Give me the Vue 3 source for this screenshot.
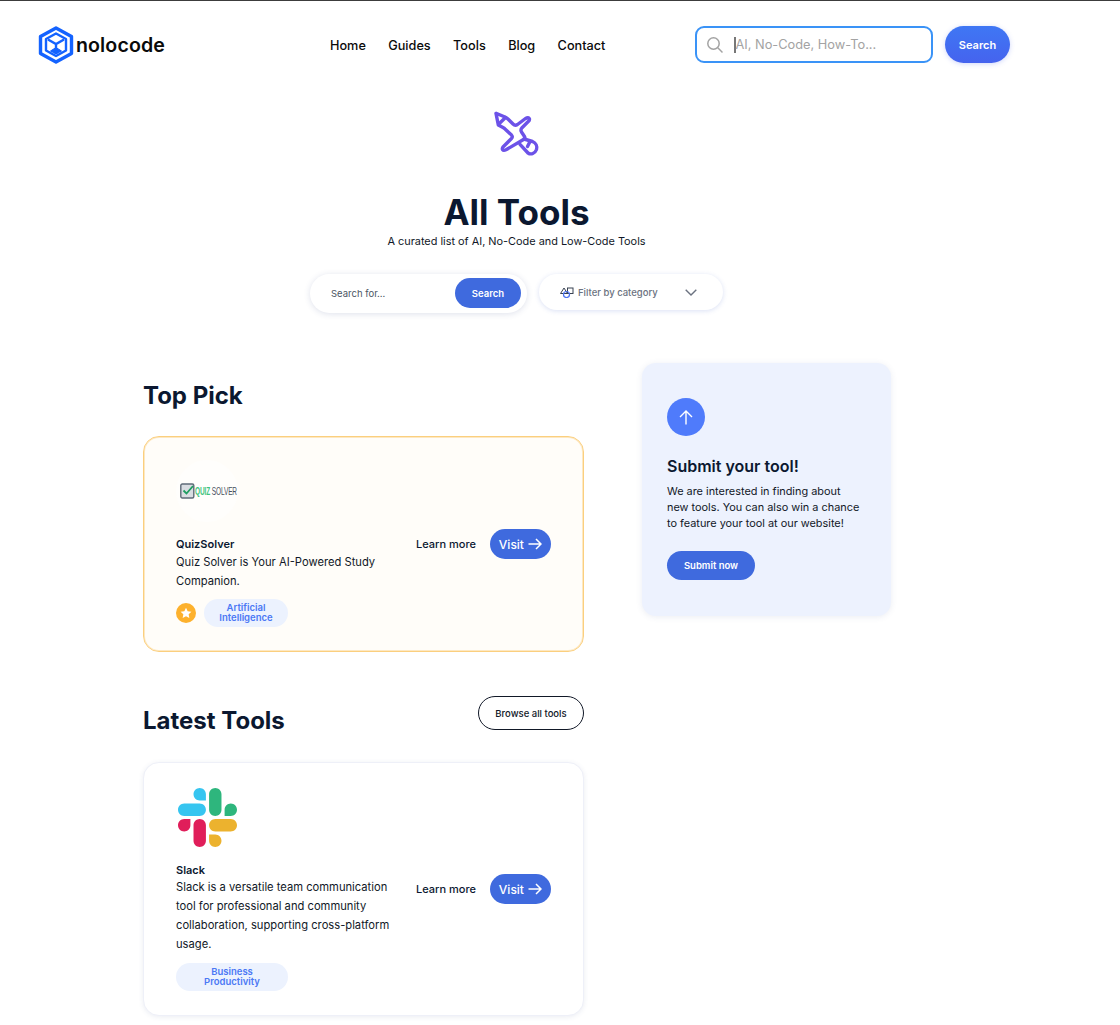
<script setup>
const navLinks = ['Home', 'Guides', 'Tools', 'Blog', 'Contact']
</script>

<template>
  <div class="page">
    <header class="header">
      <a class="logo">
        <svg width="36" height="38" viewBox="0 0 36 38" fill="none" stroke="#1463ff">
          <path d="M18 2 33.5 10.5V27.5L18 36 2.5 27.5V10.5Z" stroke-width="3.4" stroke-linejoin="round" />
          <path d="M18 7.5 28 13V24.5L18 30 8 24.5V13Z" stroke-width="2.4" stroke-linejoin="round" />
          <path d="M10 13.5 18 18 26 13.5M18 18V28" stroke-width="2.4" />
          <path d="M18 21.5 23.5 25 18 28 12.5 25Z" fill="#1463ff" stroke-width="1" />
        </svg>
        <span class="logo-text">nolocode</span>
      </a>
      <nav class="nav">
        <a v-for="link in navLinks" :key="link">{{ link }}</a>
      </nav>
      <div class="site-search">
        <svg width="18" height="18" viewBox="0 0 18 18" fill="none" stroke="#a3a3a3" stroke-width="1.5">
          <circle cx="7.5" cy="7.5" r="5.7" />
          <path d="M11.8 11.8 16.5 16.5" />
        </svg>
        <span class="caret"></span>
        <span class="site-placeholder">AI, No-Code, How-To...</span>
      </div>
      <button class="site-btn">Search</button>
    </header>

    <section class="hero">
      <svg class="hero-icon" width="50" height="50" viewBox="492 108 50 50" fill="none" stroke="#6c52e8" stroke-width="3.4" stroke-linejoin="round" stroke-linecap="round">
        <path d="M496 113.3 505 117Q507 118 508.5 119.5L513 124Q515 126 517.5 124.5L525.5 118.5Q528 117 529.3 118.5 529.8 119.5 529 120.8L521.8 128Q520.3 130 521.5 132L524.5 136.5Q525.5 138.3 523.5 139.5L506 149.8Q503.5 151 502.5 149.5 502 148.5 503 147L511.5 138.5Q513 136.7 511.5 135L505.5 129.5Q504.5 128.3 503 127.5L498.3 125Z" />
        <path d="M498.8 124 505.5 117.5" />
        <path d="M524 139 532.5 141.5C536 143 537.5 146.5 536.5 149.5 535 153.5 531 155 528 153L520 144.3" />
        <path d="M530 141.5 527.5 146.5" />
      </svg>
      <h1>All Tools</h1>
      <p class="subtitle">A curated list of AI, No-Code and Low-Code Tools</p>
      <div class="filters">
        <div class="tool-search">
          <span class="tool-placeholder">Search for...</span>
          <button class="tool-btn">Search</button>
        </div>
        <div class="category">
          <svg width="14" height="11" viewBox="0 0 14 11" fill="none" stroke-width="1">
            <path d="M.5 6.5 4 1 7.5 6.5Z" stroke="#374151" />
            <rect x="7.5" y="1" width="5.5" height="5.5" stroke="#374151" />
            <circle cx="6.5" cy="7.5" r="3" stroke="#4c73f0" stroke-width="1.2" />
          </svg>
          <span class="category-label">Filter by category</span>
          <svg class="chevron" width="12" height="7" viewBox="0 0 12 7" fill="none" stroke="#6b7280" stroke-width="1.4">
            <path d="M.7.7 6 6 11.3.7" />
          </svg>
        </div>
      </div>
    </section>

    <main class="content">
      <div class="tools">
        <h2 class="top-title">Top Pick</h2>
        <article class="card card-top">
          <div class="card-body">
            <div class="quiz-logo">
              <svg width="15" height="16" viewBox="0 0 15 16" fill="none">
                <rect x=".8" y="1" width="13" height="14" rx="1.5" fill="#d9dde2" stroke="#5f6b78" stroke-width="1.4" />
                <path d="M3.5 7.5 6.5 10.5 13 3" stroke="#1f9d61" stroke-width="1.8" />
              </svg>
              <span class="quiz-word"><b>QUIZ</b> SOLVER</span>
            </div>
            <h3>QuizSolver</h3>
            <p>Quiz Solver is Your AI-Powered Study Companion.</p>
            <div class="tags">
              <span class="star">
                <svg width="12" height="12" viewBox="0 0 24 24" fill="#fff">
                  <path d="M12 1.5 15.3 8.3 22.8 9.3 17.3 14.5 18.7 22 12 18.4 5.3 22 6.7 14.5 1.2 9.3 8.7 8.3Z" />
                </svg>
              </span>
              <span class="tag tag-ai">Artificial<br />Intelligence</span>
            </div>
          </div>
          <div class="card-actions">
            <a class="learn">Learn more</a>
            <a class="visit">
              Visit
              <svg width="14" height="12" viewBox="0 0 14 12" fill="none" stroke="#fff" stroke-width="1.5">
                <path d="M.5 6H13M8 1 13 6 8 11" />
              </svg>
            </a>
          </div>
        </article>

        <div class="latest-head">
          <h2>Latest Tools</h2>
          <button class="browse">Browse all tools</button>
        </div>
        <article class="card card-slack">
          <div class="card-body">
            <svg class="slack" width="59" height="59" viewBox="0 0 122.8 122.8">
              <path fill="#e01e5a" d="M25.8 77.6c0 7.1-5.8 12.9-12.9 12.9S0 84.7 0 77.6s5.8-12.9 12.9-12.9h12.9v12.9zM32.3 77.6c0-7.1 5.8-12.9 12.9-12.9s12.9 5.8 12.9 12.9v32.3c0 7.1-5.8 12.9-12.9 12.9s-12.9-5.8-12.9-12.9V77.6z" />
              <path fill="#36c5f0" d="M45.2 25.8c-7.1 0-12.9-5.8-12.9-12.9S38.1 0 45.2 0s12.9 5.8 12.9 12.9v12.9H45.2zM45.2 32.3c7.1 0 12.9 5.8 12.9 12.9s-5.8 12.9-12.9 12.9H12.9C5.8 58.1 0 52.3 0 45.2s5.8-12.9 12.9-12.9h32.3z" />
              <path fill="#2eb67d" d="M97 45.2c0-7.1 5.8-12.9 12.9-12.9s12.9 5.8 12.9 12.9-5.8 12.9-12.9 12.9H97V45.2zM90.5 45.2c0 7.1-5.8 12.9-12.9 12.9s-12.9-5.8-12.9-12.9V12.9C64.7 5.8 70.5 0 77.6 0s12.9 5.8 12.9 12.9v32.3z" />
              <path fill="#ecb22e" d="M77.6 97c7.1 0 12.9 5.8 12.9 12.9s-5.8 12.9-12.9 12.9-12.9-5.8-12.9-12.9V97h12.9zM77.6 90.5c-7.1 0-12.9-5.8-12.9-12.9s5.8-12.9 12.9-12.9h32.3c7.1 0 12.9 5.8 12.9 12.9s-5.8 12.9-12.9 12.9H77.6z" />
            </svg>
            <h3>Slack</h3>
            <p>Slack is a versatile team communication tool for professional and community collaboration, supporting cross-platform usage.</p>
            <div class="tags">
              <span class="tag tag-biz">Business<br />Productivity</span>
            </div>
          </div>
          <div class="card-actions">
            <a class="learn">Learn more</a>
            <a class="visit">
              Visit
              <svg width="14" height="12" viewBox="0 0 14 12" fill="none" stroke="#fff" stroke-width="1.5">
                <path d="M.5 6H13M8 1 13 6 8 11" />
              </svg>
            </a>
          </div>
        </article>
      </div>

      <aside class="submit">
        <span class="submit-icon">
          <svg width="14" height="15" viewBox="0 0 14 15" fill="none" stroke="#fff" stroke-width="1.4">
            <path d="M7 14.5V1M1 7 7 1 13 7" />
          </svg>
        </span>
        <h3>Submit your tool!</h3>
        <p>We are interested in finding about new tools. You can also win a chance to feature your tool at our website!</p>
        <button class="submit-btn">Submit now</button>
      </aside>
    </main>
  </div>
</template>

<style>
html,
body {
  margin: 0;
  background: #fff;
  overflow: hidden;
}
</style>

<style scoped>
.page {
  height: 1025px;
  overflow: hidden;
  border-top: 1px solid #3c3c3c;
  box-sizing: border-box;
  font-family: Inter, "Liberation Sans", sans-serif;
  color: #0b1830;
}
.header {
  display: flex;
  align-items: center;
  height: 87px;
  padding-left: 38px;
}
.logo {
  display: flex;
  align-items: center;
  gap: 2px;
  width: 292px;
}
.logo-text {
  font-size: 19.6px;
  font-weight: 600;
  letter-spacing: 0.1px;
  color: #0a0a0a;
}
.nav {
  display: flex;
  gap: 22.4px;
  width: 365px;
  padding-top: 1px;
  font-size: 12.7px;
  font-weight: 500;
  color: #0a0a0a;
}
.site-search {
  display: flex;
  align-items: center;
  box-sizing: border-box;
  width: 238px;
  height: 37px;
  padding-left: 9px;
  border: 2px solid #3a93f7;
  border-radius: 9px;
}
.caret {
  width: 1.5px;
  height: 16px;
  margin-left: 10px;
  background: #777;
}
.site-placeholder {
  font-size: 12.8px;
  color: #a3a3a3;
}
.site-btn {
  width: 65px;
  height: 37px;
  margin-left: 12px;
  border: 0;
  border-radius: 19px;
  background: linear-gradient(#3f77f4, #4563ee);
  box-shadow: 0 1px 5px rgba(70, 100, 240, 0.25);
  color: #fff;
  font: 600 11px Inter, sans-serif;
}
.hero {
  display: flex;
  flex-direction: column;
  align-items: center;
  width: 1033px;
}
.hero-icon {
  margin-top: 20px;
}
h1 {
  margin: 32px 0 0;
  font-size: 35px;
  line-height: 44px;
  font-weight: 700;
}
.subtitle {
  margin: 0;
  font-size: 10.9px;
  line-height: 14px;
  color: #111827;
}
.filters {
  display: flex;
  align-items: flex-start;
  gap: 12px;
  margin-top: 26px;
}
.tool-search {
  display: flex;
  align-items: center;
  justify-content: space-between;
  box-sizing: border-box;
  width: 217px;
  height: 39px;
  padding: 0 6px 0 21px;
  border-radius: 20px;
  background: #fff;
  box-shadow: 0 1px 6px rgba(50, 70, 130, 0.16);
}
.tool-placeholder {
  font-size: 9.5px;
  color: #4b5563;
}
.tool-btn {
  width: 66px;
  height: 30px;
  margin-bottom: 1px;
  border: 0;
  border-radius: 15px;
  background: #3f6ade;
  color: #fff;
  font: 600 9.5px Inter, sans-serif;
}
.category {
  display: flex;
  align-items: center;
  box-sizing: border-box;
  width: 184px;
  height: 36px;
  padding: 0 26px 0 21px;
  border-radius: 18px;
  background: #fff;
  box-shadow: 0 1px 5px rgba(70, 100, 200, 0.2);
}
.category-label {
  margin-left: 4px;
  font-size: 9.5px;
  font-weight: 500;
  color: #6b7280;
}
.chevron {
  margin-left: auto;
}
.content {
  display: flex;
  align-items: flex-start;
  gap: 58px;
  margin: 50px 0 0 143px;
}
.tools {
  width: 441px;
}
h2 {
  margin: 0;
  font-size: 24px;
  line-height: 32px;
  font-weight: 700;
}
.top-title {
  margin-top: 17px;
}
.card {
  display: flex;
  align-items: center;
  box-sizing: border-box;
  padding: 0 32px;
  border-radius: 16px;
}
.card-top {
  height: 216px;
  margin-top: 24px;
  border: 1px solid #fbcf7e;
  box-shadow: inset 0 0 0 1px rgba(251, 207, 126, 0.45);
  background: #fffdf9;
}
.card-top .card-body {
  margin-bottom: 2px;
}
.card-top .card-body p {
  margin-top: 2px;
}
.card-top .tags {
  margin-top: 8px;
}
.card-slack {
  height: 254px;
  margin-top: 25px;
  border: 1px solid #eef0f8;
  background: #fff;
  box-shadow: 0 1px 5px rgba(60, 80, 140, 0.1);
}
.card-body {
  width: 222px;
  flex: none;
}
.quiz-logo {
  display: flex;
  align-items: center;
  box-sizing: border-box;
  width: 62px;
  height: 62px;
  padding-left: 4px;
  border-radius: 50%;
  background: #fffefc;
  white-space: nowrap;
}
.quiz-logo svg {
  flex: none;
}
.quiz-word {
  display: inline-block;
  font: 400 10.5px "Liberation Sans", sans-serif;
  letter-spacing: -0.2px;
  color: #48505c;
  transform: scaleX(0.62);
  transform-origin: left center;
}
.quiz-word b {
  font-weight: 700;
  color: #3fc47e;
}
.slack {
  display: block;
  margin: 0 0 16px 2px;
}
h3 {
  margin: 0;
  font-size: 11px;
  line-height: 14px;
  font-weight: 600;
}
.card-top h3 {
  margin-top: 15px;
}
.card-body p {
  margin: 1px 0 0;
  font-size: 11.2px;
  line-height: 19px;
  color: #111827;
}
.tags {
  display: flex;
  align-items: center;
  gap: 8px;
  margin-top: 9px;
}
.star {
  display: flex;
  align-items: center;
  justify-content: center;
  width: 20px;
  height: 20px;
  border-radius: 50%;
  background: #fdb12d;
}
.tag {
  box-sizing: border-box;
  height: 28px;
  padding-top: 4px;
  border-radius: 14px;
  background: #ecf2fe;
  color: #4b78f5;
  font-size: 9.5px;
  line-height: 10px;
  font-weight: 600;
  text-align: center;
}
.tag-ai {
  width: 84px;
}
.tag-biz {
  width: 112px;
}
.card-actions {
  display: flex;
  align-items: center;
  gap: 14px;
  margin-left: 18px;
}
.learn {
  font-size: 11px;
  font-weight: 500;
  white-space: nowrap;
}
.visit {
  display: flex;
  align-items: center;
  justify-content: center;
  gap: 4px;
  width: 61px;
  height: 30px;
  border-radius: 15px;
  background: #3f6ade;
  color: #fff;
  font-size: 12px;
  font-weight: 500;
}
.latest-head {
  display: flex;
  align-items: center;
  justify-content: space-between;
  margin-top: 37px;
}
.latest-head h2 {
  margin-top: 16px;
}
.browse {
  width: 106px;
  height: 34px;
  border: 1px solid #111827;
  border-radius: 17px;
  background: #fff;
  color: #111827;
  font: 500 9.5px Inter, sans-serif;
}
.submit {
  box-sizing: border-box;
  width: 249px;
  height: 253px;
  padding: 35px 25px 0;
  border-radius: 14px;
  background: #edf2fe;
  box-shadow: 0 1px 6px rgba(60, 80, 140, 0.1);
}
.submit-icon {
  display: flex;
  align-items: center;
  justify-content: center;
  width: 38px;
  height: 38px;
  border-radius: 50%;
  background: #4f7bfb;
}
.submit h3 {
  margin: 19px 0 0;
  font-size: 16px;
  line-height: 22px;
}
.submit p {
  max-width: 194px;
  margin: 6px 0 0;
  font-size: 10.9px;
  line-height: 16px;
  color: #111827;
}
.submit-btn {
  display: block;
  width: 88px;
  height: 29px;
  margin-top: 20px;
  border: 0;
  border-radius: 15px;
  background: #3f6ade;
  color: #fff;
  font: 600 9.5px Inter, sans-serif;
}
</style>
